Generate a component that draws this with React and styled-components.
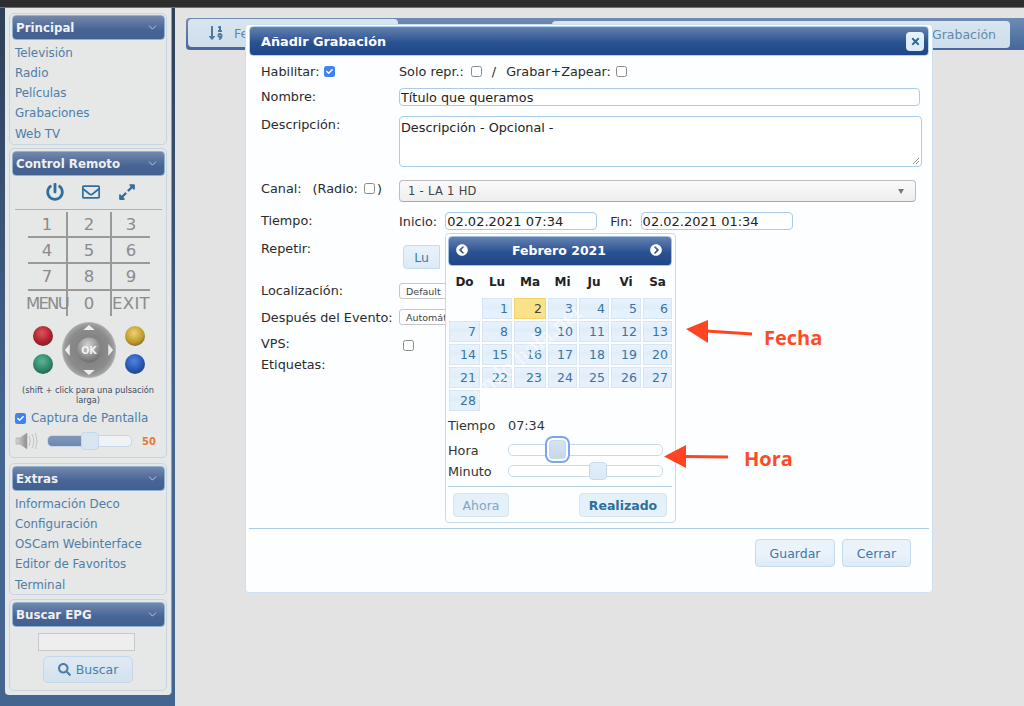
import React from "react";
import styled, { createGlobalStyle } from "styled-components";
import { ChevronDown } from "lucide-react";
import {
  FaPowerOff,
  FaRegEnvelope,
  FaExpandAlt,
  FaSortNumericDown,
  FaSearch,
  FaTimes,
  FaChevronCircleLeft,
  FaChevronCircleRight,
  FaCheck,
} from "react-icons/fa";

const Global = createGlobalStyle`
  html, body { margin: 0; padding: 0; height: 100%; overflow: hidden; }
  body { font-family: "DejaVu Sans", Verdana, sans-serif; background: #e3e3e3; }
  * { box-sizing: border-box; }
`;

const Page = styled.div`
  position: relative;
  width: 1024px;
  height: 706px;
  display: flex;
  flex-direction: column;
  overflow: hidden;
`;
const TopBar = styled.div`
  height: 8px;
  flex: none;
  background: #2e2e2e;
  border-bottom: 1px solid #4c7d9c;
`;
const Body = styled.div`
  flex: 1;
  display: flex;
  min-height: 0;
`;
const SideFrame = styled.aside`
  width: 175px;
  flex: none;
  padding: 0 3px 11px 5px;
  background: linear-gradient(#2f4058, #456591 60%);
`;
const SidePanel = styled.div`
  height: 100%;
  background: #e6e7e7;
  border-radius: 0 0 4px 4px;
  padding-top: 5px;
  border-right: 1px solid #7fa3c4;
`;
const Section = styled.section`
  width: 158px;
  height: ${(p) => p.$h}px;
  margin: ${(p) => p.$mt || 0}px 0 0 4px;
  border: 1px solid #c8d5e0;
  border-radius: 5px;
  display: flex;
  flex-direction: column;
`;
const SectionHead = styled.div`
  height: 25px;
  flex: none;
  margin: ${(p) => (p.$inset ? 2 : 1)}px 1px 0 2px;
  padding: 0 5px 0 3px;
  border-radius: 4px;
  border: 1px solid #8fb0cf;
  background: linear-gradient(#7488ac, #466496 60%, #44608f);
  color: #f0f0f0;
  font-weight: 700;
  font-size: 11.8px;
  display: flex;
  align-items: center;
  justify-content: space-between;
`;
const LinkList = styled.div`
  padding: 2.5px 0 0 5px;
`;
const SideLink = styled.div`
  height: 20.25px;
  line-height: 20.25px;
  font-size: 11.9px;
  color: #4d7ea6;
  white-space: nowrap;
`;
const IconBar = styled.div`
  margin: 6px 4px 0 5px;
  height: 28px;
  padding: 0 0 7px 5px;
  display: flex;
  align-items: center;
  justify-content: center;
  gap: 18px;
  color: #2f6f9f;
  font-size: 18px;
  border-bottom: 1px solid #8dbbdf;
`;
const Keypad = styled.div`
  width: 122px;
  margin: 2px 0 0 18px;
  display: grid;
  grid-template-columns: 40px 44px 38px;
  grid-template-rows: 26px 26px 26.5px 25px;
`;
const Key = styled.div`
  display: flex;
  align-items: center;
  justify-content: center;
  color: #8b8b8b;
  font-size: 16.5px;
  letter-spacing: ${(p) => p.$track || 0}px;
  white-space: nowrap;
  border-right: ${(p) => (p.$noRight ? "none" : "2.5px solid #999")};
  border-bottom: ${(p) => (p.$noBottom ? "none" : "2.5px solid #999")};
`;
const Remote = styled.div`
  margin: 6.5px 0 0 2px;
  display: flex;
  align-items: center;
  justify-content: center;
  gap: 9px;
`;
const BallColumn = styled.div`
  display: flex;
  flex-direction: column;
  gap: 8px;
`;
const Ball = styled.div`
  width: 20px;
  height: 20px;
  border-radius: 50%;
  background: radial-gradient(circle at 45% 35%, ${(p) => p.$light}, ${(p) => p.$c} 55%, #2c2c2c 110%);
`;
const Hint = styled.div`
  margin-top: 7px;
  font-size: 8.2px;
  line-height: 10px;
  text-align: center;
  color: #3c4d60;
`;
const CaptureRow = styled.div`
  margin: 5px 0 0 5px;
  display: flex;
  align-items: center;
  gap: 5px;
  font-size: 11.9px;
  color: #4d7ea6;
  height: 16px;
  white-space: nowrap;
`;
const CheckOn = styled.span`
  width: 11px;
  height: 11px;
  border-radius: 2.5px;
  background: #3f82f0;
  color: #fff;
  font-size: 7px;
  display: inline-flex;
  align-items: center;
  justify-content: center;
  flex: none;
`;
const CheckOff = styled.span`
  width: 11px;
  height: 11px;
  margin-left: ${(p) => p.$ml || 0}px;
  border-radius: 2.5px;
  background: #fff;
  border: 1px solid #8a8a8a;
  display: inline-block;
  flex: none;
`;
const VolumeRow = styled.div`
  margin: 5px 0 0 5px;
  display: flex;
  align-items: center;
  height: 20px;
`;
const VolumeTrack = styled.div`
  position: relative;
  width: 85px;
  height: 12px;
  margin-left: 8px;
  border: 1px solid #c5d7e8;
  border-radius: 5px;
  background: #f0f3f5;
`;
const VolumeFill = styled.div`
  height: 100%;
  background: linear-gradient(#8097bb, #6f88b0);
  border-radius: 4px 0 0 4px;
`;
const VolumeThumb = styled.div`
  position: absolute;
  left: 33px;
  top: -4px;
  width: 18px;
  height: 18px;
  border-radius: 4px;
  border: 1px solid #c5d7e8;
  background: #d9e5f0;
`;
const VolumeValue = styled.div`
  width: 22px;
  margin-left: 6px;
  font-size: 10px;
  font-weight: 700;
  color: #e07b39;
  background: #e9e9e9;
  text-align: center;
`;
const SearchField = styled.div`
  width: 97px;
  height: 18px;
  margin: 6px 0 0 28px;
  background: #eeeeee;
  border: 1px solid #c8c8c8;
`;
const SearchButton = styled.div`
  width: 90px;
  height: 27px;
  margin: 5px 0 0 33px;
  border-radius: 5px;
  border: 1px solid #c5d7e8;
  background: linear-gradient(#dfe9f2, #d3e2ee);
  color: #4d7ea6;
  font-size: 12.5px;
  display: flex;
  align-items: center;
  justify-content: center;
  gap: 5px;
`;

const Main = styled.main`
  flex: 1;
  padding: 10px 0 0 11px;
`;
const Toolbar = styled.div`
  height: 32px;
  display: flex;
  align-items: stretch;
  justify-content: space-between;
  padding: 0 14px 0 0;
  border-radius: 4px 0 0 4px;
  background: linear-gradient(#6e8bb3, #44689b);
  border-bottom: 1px solid #3f6ea0;
`;
const ToolButton = styled.div`
  margin: ${(p) => (p.$first ? "1px 0 2px 2px" : "3px 0 1px 0")};
  width: ${(p) => p.$w}px;
  border-radius: 4px;
  background: linear-gradient(#d9e5ef, #cfdeeb);
  color: #5b8bb0;
  font-size: 12.5px;
  display: flex;
  align-items: center;
  justify-content: ${(p) => (p.$first ? "flex-start" : "flex-end")};
  gap: 10px;
  padding: ${(p) => (p.$first ? "0 0 0 20px" : "0 14px 0 0")};
  white-space: nowrap;
`;

const Modal = styled.div`
  position: absolute;
  left: 245px;
  top: 24px;
  width: 688px;
  height: 569px;
  background: #fcfeff;
  border: 1px solid #cfe1f1;
  border-radius: 4px;
  padding: 1px 2px;
  display: flex;
  flex-direction: column;
`;
const TitleBar = styled.div`
  height: 30px;
  flex: none;
  margin: 0 1px;
  padding: 0 4px 0 11px;
  border-radius: 4px;
  border: 1px solid #b6d3ec;
  background: linear-gradient(#6682b0, #2a5292 55%, #1f4688);
  color: #fff;
  font-weight: 700;
  font-size: 12.8px;
  display: flex;
  align-items: center;
  justify-content: space-between;
`;
const CloseButton = styled.div`
  width: 18px;
  height: 19px;
  border-radius: 4px;
  background: linear-gradient(#e8f3fc, #d9eaf8);
  color: #2a6a9c;
  font-size: 11px;
  display: flex;
  align-items: center;
  justify-content: center;
`;
const Form = styled.div`
  padding-left: 13px;
`;
const Row = styled.div`
  display: flex;
  height: ${(p) => p.$h}px;
  margin-top: ${(p) => p.$mt}px;
  font-size: 12.8px;
  color: #2b2b2b;
`;
const Label = styled.div`
  width: 138px;
  flex: none;
  display: flex;
  gap: 5px;
  align-items: center;
  white-space: nowrap;
  height: ${(p) => p.$lh || 16}px;
  margin-top: ${(p) => p.$top || 0}px;
`;
const Inline = styled.div`
  display: flex;
  align-items: center;
  gap: ${(p) => p.$gap || 5}px;
  white-space: nowrap;
  height: 100%;
`;
const Slash = styled.span`
  margin: 0 5px;
`;
const RadioOpen = styled.span`
  margin-left: 6px;
`;
const RadioClose = styled.span`
  margin-left: -3px;
`;
const FinLabel = styled.span`
  margin-left: 5px;
`;
const Field = styled.div`
  width: ${(p) => p.$w}px;
  height: 100%;
  border: 1px solid #a9cde8;
  border-radius: 4px;
  background: #fff;
  padding: ${(p) => (p.$multi ? "3px 1px" : "1px 1px 0")};
  font-size: ${(p) => p.$fs || 12.8}px;
  line-height: 16px;
  color: #222;
  white-space: nowrap;
  position: relative;
`;
const Grip = styled.svg`
  position: absolute;
  right: 1px;
  bottom: 1px;
`;
const SelectBox = styled.div`
  width: 517px;
  height: 100%;
  border: 1px solid #bdbdbd;
  border-bottom-color: #a8a8a8;
  border-radius: 4px;
  background: linear-gradient(#fafafa, #eeeeee);
  font-size: 11.5px;
  letter-spacing: 0.3px;
  color: #444;
  display: flex;
  align-items: center;
  justify-content: space-between;
  padding: 0 11px 0 8px;
`;
const Caret = styled.span`
  width: 0;
  height: 0;
  border-left: 3.5px solid transparent;
  border-right: 3.5px solid transparent;
  border-top: 5px solid #777;
`;
const MiniSelect = styled.div`
  width: 70px;
  height: 100%;
  border: 1px solid #c6c6c6;
  border-radius: 3px;
  background: #fff;
  font-size: 9.5px;
  color: #444;
  display: flex;
  align-items: center;
  padding-left: 6px;
  overflow: hidden;
  white-space: nowrap;
`;
const DayToggle = styled.div`
  width: 37px;
  height: 24px;
  margin-left: 4px;
  border: 1px solid #c5dbec;
  border-radius: 4px 0 0 4px;
  background: linear-gradient(#e8f2fb, #dcebf8);
  color: #3d7cab;
  font-size: 12.5px;
  display: flex;
  align-items: center;
  justify-content: center;
`;
const VpsBox = styled.div`
  margin: 4px 0 0 4px;
`;
const Footer = styled.div`
  margin: auto 1px 0;
  height: 63px;
  flex: none;
  border-top: 1px solid #a9cde8;
  display: flex;
  justify-content: flex-end;
  align-items: flex-start;
  gap: 7px;
  padding: 10px 18px 0 0;
`;
const ActionButton = styled.div`
  width: ${(p) => p.$w}px;
  height: 28px;
  border-radius: 4px;
  border: 1px solid #c5dbec;
  background: linear-gradient(#eaf3fc 50%, #dcebf9);
  color: #3f77a6;
  font-size: 12.5px;
  display: flex;
  align-items: center;
  justify-content: center;
`;

const Picker = styled.div`
  position: absolute;
  left: 199px;
  top: 208px;
  width: 231px;
  height: 290px;
  background: #fdfeff;
  border: 1px solid #c5dbec;
  border-radius: 4px;
  padding: 2px 3px 2px 2px;
  overflow: hidden;
`;
const PickerHead = styled.div`
  height: 30px;
  border-radius: 4px;
  border: 1px solid #9fc3e2;
  background: linear-gradient(#6682b0, #2a5292 55%, #1f4688);
  color: #fff;
  font-weight: 700;
  font-size: 12.5px;
  display: flex;
  align-items: center;
  justify-content: space-between;
  padding: 0 9px 2px 7px;
`;
const NavIcon = styled.span`
  display: inline-flex;
  font-size: 12px;
`;
const Weekdays = styled.div`
  display: grid;
  grid-template-columns: 31px 30px 32px 29px 30px 30px 29px;
  column-gap: 2px;
  margin: 4px 0 4px 1px;
  height: 24px;
  align-items: center;
  font-size: 12px;
  font-weight: 700;
  color: #222;
  text-align: center;
`;
const DayGrid = styled.div`
  display: grid;
  grid-template-columns: 31px 30px 32px 29px 30px 30px 29px;
  grid-auto-rows: 21px;
  gap: 2px;
  margin: 0 0 0 1px;
`;
const Day = styled.div`
  grid-column: ${(p) => p.$col || "auto"};
  border: 1px solid ${(p) => (p.$today ? "#f5d36b" : "#d6e6f4")};
  background: ${(p) => (p.$today ? "#fae28a" : "linear-gradient(#e8f2fc, #dfedf9 50%, #e4f0fb 55%, #e6f1fb)")};
  color: ${(p) => (p.$today ? "#444" : "#3a74a4")};
  font-size: 12.5px;
  line-height: 20px;
  text-align: right;
  padding-right: 3px;
`;
const Watermark = styled.div`
  position: absolute;
  left: -15px;
  top: 103px;
  width: 190px;
  transform: rotate(-40deg);
  font-family: "Liberation Serif", serif;
  font-size: 25px;
  line-height: 30px;
  text-align: center;
  color: rgba(255, 255, 255, 0.6);
  pointer-events: none;
  white-space: nowrap;
`;
const TimeRow = styled.div`
  display: grid;
  grid-template-columns: 60px 155px;
  align-items: center;
  height: ${(p) => p.$h}px;
  margin-top: ${(p) => p.$mt || 0}px;
  font-size: 12.8px;
  color: #333;
  white-space: nowrap;
`;
const SliderName = styled.span`
  margin-top: 2px;
`;
const Track = styled.div`
  position: relative;
  height: 12px;
  border: 1px solid #c5dbec;
  border-radius: 5px;
  background: #fff;
`;
const Thumb = styled.div`
  position: absolute;
  left: ${(p) => p.$x}px;
  top: -4px;
  width: 18px;
  height: 18px;
  border-radius: 4px;
  background: linear-gradient(#e2eefa, #dbe8f5);
  border: 1px solid #c5dbec;
  ${(p) =>
    p.$focus &&
    `top: -5px; width: 17px; height: 19px; background: linear-gradient(#d4e3f1, #c6d8e9); box-shadow: 0 0 0 2px #fff, 0 0 0 4px #7ba6ee;`}
`;
const PickerRule = styled.div`
  height: 1px;
  margin: 5px 0 0 0;
  background: #b9cfe2;
`;
const PickerButtons = styled.div`
  display: flex;
  justify-content: space-between;
  padding: 6px 5px 0 5px;
`;
const PickerButton = styled.div`
  height: 24px;
  width: ${(p) => p.$w}px;
  border-radius: 4px;
  border: 1px solid #d5e5f2;
  background: #e4f0fa;
  color: ${(p) => (p.$strong ? "#2e6e9e" : "#7ea7c6")};
  font-weight: ${(p) => (p.$strong ? 700 : 400)};
  font-size: 12.5px;
  display: flex;
  align-items: center;
  justify-content: center;
`;

const Annotation = styled.div`
  position: absolute;
  left: ${(p) => p.$x}px;
  top: ${(p) => p.$y}px;
  display: flex;
  align-items: flex-start;
  gap: ${(p) => p.$gap}px;
`;
const AnnotationText = styled.div`
  font-family: "Open Sans", "DejaVu Sans", sans-serif;
  font-weight: 700;
  font-size: 20px;
  line-height: 22px;
  color: #ff4a26;
  margin-top: ${(p) => p.$mt}px;
`;

function Arrow({ shaft, head }) {
  return (
    <svg width="68" height="27" viewBox="0 0 68 27">
      <path d={shaft} stroke="#ff4422" strokeWidth="3" fill="none" />
      <path d={head} fill="#ff4422" />
    </svg>
  );
}

function Speaker() {
  return (
    <svg width="24" height="20" viewBox="0 0 24 20">
      <defs>
        <linearGradient id="spk" x1="0" x2="1">
          <stop offset="0" stopColor="#d8d8d8" />
          <stop offset="1" stopColor="#8e8e8e" />
        </linearGradient>
      </defs>
      <path d="M1 7h4L12 2v16L5 13H1Z" fill="url(#spk)" stroke="#a5a5a5" strokeWidth=".6" />
      <path d="M14 5q2.500 5 0 10M17 3q3.500 7 0 14M20.500 2q3 8 0 16" stroke="#b7b7b7" fill="none" strokeWidth=".8" />
    </svg>
  );
}

function Dpad() {
  return (
    <svg width="54" height="56" viewBox="0 0 56 56" preserveAspectRatio="none">
      <defs>
        <radialGradient id="okg" cx=".45" cy=".3" r=".8">
          <stop offset="0" stopColor="#d2d2d2" />
          <stop offset="1" stopColor="#5f5f5f" />
        </radialGradient>
        <radialGradient id="ring" cx=".5" cy=".5" r=".5">
          <stop offset="0" stopColor="#777" />
          <stop offset=".8" stopColor="#8c8c8c" />
          <stop offset="1" stopColor="#a6a6a6" />
        </radialGradient>
      </defs>
      <circle cx="28" cy="28" r="27.500" fill="url(#ring)" stroke="#b5b5b5" />
      <circle cx="28" cy="28" r="12.500" fill="url(#okg)" />
      <text x="28" y="32" textAnchor="middle" fontFamily="DejaVu Sans" fontWeight="700" fontSize="10" fill="#f2f2f2">OK</text>
      <path d="M28 3l6 5H22ZM28 53l6-5H22ZM3 28l5-6V34ZM53 28l-5-6V34Z" fill="#ededed" />
    </svg>
  );
}

const keys = [
  { k: "1" }, { k: "2" }, { k: "3" },
  { k: "4" }, { k: "5" }, { k: "6" },
  { k: "7" }, { k: "8" }, { k: "9" },
  { k: "MENU", track: -1.8 }, { k: "0" }, { k: "EXIT", track: 0.3 },
];
const week = ["Do", "Lu", "Ma", "Mi", "Ju", "Vi", "Sa"];
const days = Array.from({ length: 28 }, (_, i) => i + 1);

function Head({ children, inset }) {
  return (
    <SectionHead $inset={inset}>
      {children}
      <ChevronDown size={13} strokeWidth={1.4} color="#dfe6f0" />
    </SectionHead>
  );
}

export default function App() {
  return (
    <Page>
      <Global />
      <TopBar />
      <Body>
        <SideFrame>
          <SidePanel>
            <Section $h={132}>
              <Head>Principal</Head>
              <LinkList>
                {["Televisión", "Radio", "Películas", "Grabaciones", "Web TV"].map((t) => (
                  <SideLink key={t}>{t}</SideLink>
                ))}
              </LinkList>
            </Section>
            <Section $h={310} $mt={3}>
              <Head inset>Control Remoto</Head>
              <IconBar>
                <FaPowerOff />
                <FaRegEnvelope />
                <FaExpandAlt />
              </IconBar>
              <Keypad>
                {keys.map(({ k, track }, i) => (
                  <Key key={k} $track={track} $noRight={i % 3 === 2} $noBottom={i > 8}>
                    {k}
                  </Key>
                ))}
              </Keypad>
              <Remote>
                <BallColumn>
                  <Ball $c="#a8212e" $light="#e0525c" />
                  <Ball $c="#2c8467" $light="#5cb598" />
                </BallColumn>
                <Dpad />
                <BallColumn>
                  <Ball $c="#c09a2b" $light="#ecd272" />
                  <Ball $c="#2554b0" $light="#4f84e0" />
                </BallColumn>
              </Remote>
              <Hint>
                (shift + click para una pulsación
                <br />
                larga)
              </Hint>
              <CaptureRow>
                <CheckOn>
                  <FaCheck />
                </CheckOn>
                Captura de Pantalla
              </CaptureRow>
              <VolumeRow>
                <Speaker />
                <VolumeTrack>
                  <VolumeFill style={{ width: "50%" }} />
                  <VolumeThumb />
                </VolumeTrack>
                <VolumeValue>50</VolumeValue>
              </VolumeRow>
            </Section>
            <Section $h={132} $mt={5}>
              <Head inset>Extras</Head>
              <LinkList>
                {["Información Deco", "Configuración", "OSCam Webinterface", "Editor de Favoritos", "Terminal"].map((t) => (
                  <SideLink key={t}>{t}</SideLink>
                ))}
              </LinkList>
            </Section>
            <Section $h={92} $mt={4}>
              <Head inset>Buscar EPG</Head>
              <SearchField />
              <SearchButton>
                <FaSearch size={13} />
                Buscar
              </SearchButton>
            </Section>
          </SidePanel>
        </SideFrame>
        <Main>
          <Toolbar>
            <ToolButton $first $w={210}>
              <FaSortNumericDown size={16} color="#4a78a0" />
              Fe
            </ToolButton>
            <ToolButton $w={458}>Grabación</ToolButton>
          </Toolbar>
        </Main>
      </Body>

      <Modal>
        <TitleBar>
          Añadir Grabación
          <CloseButton>
            <FaTimes />
          </CloseButton>
        </TitleBar>
        <Form>
          <Row $h={20} $mt={5}>
            <Label $lh={20}>
              Habilitar:
              <CheckOn>
                <FaCheck />
              </CheckOn>
            </Label>
            <Inline>
              Solo repr.:
              <CheckOff $ml={2} />
              <Slash>/</Slash>
              Grabar+Zapear:
              <CheckOff />
            </Inline>
          </Row>
          <Row $h={18} $mt={7}>
            <Label>Nombre:</Label>
            <Field $w={521}>Título que queramos</Field>
          </Row>
          <Row $h={51} $mt={10}>
            <Label>Descripción:</Label>
            <Field $w={523} $multi>
              Descripción - Opcional -
              <Grip width="8" height="8" viewBox="0 0 8 8">
                <path d="M1 7L7 1M4 7L7 4" stroke="#777" strokeWidth=".8" />
              </Grip>
            </Field>
          </Row>
          <Row $h={22} $mt={13}>
            <Label>
              Canal:
              <RadioOpen>(Radio:</RadioOpen>
              <CheckOff $ml={1} />
              <RadioClose>)</RadioClose>
            </Label>
            <SelectBox>
              1 - LA 1 HD
              <Caret />
            </SelectBox>
          </Row>
          <Row $h={18} $mt={10}>
            <Label>Tiempo:</Label>
            <Inline $gap={8}>
              Inicio:
              <Field $w={152} $fs={13}>02.02.2021 07:34</Field>
              <FinLabel>Fin:</FinLabel>
              <Field $w={152} $fs={13}>02.02.2021 01:34</Field>
            </Inline>
          </Row>
          <Row $h={24} $mt={15}>
            <Label $top={-5}>Repetir:</Label>
            <DayToggle>Lu</DayToggle>
          </Row>
          <Row $h={16} $mt={14}>
            <Label $top={-1}>Localización:</Label>
            <MiniSelect>Default</MiniSelect>
          </Row>
          <Row $h={16} $mt={10}>
            <Label>Después del Evento:</Label>
            <MiniSelect>Automático</MiniSelect>
          </Row>
          <Row $h={16} $mt={10}>
            <Label>VPS:</Label>
            <VpsBox>
              <CheckOff />
            </VpsBox>
          </Row>
          <Row $h={16} $mt={5}>
            <Label>Etiquetas:</Label>
          </Row>
        </Form>
        <Footer>
          <ActionButton $w={80}>Guardar</ActionButton>
          <ActionButton $w={69}>Cerrar</ActionButton>
        </Footer>
        <Picker>
          <PickerHead>
            <NavIcon>
              <FaChevronCircleLeft />
            </NavIcon>
            Febrero 2021
            <NavIcon>
              <FaChevronCircleRight />
            </NavIcon>
          </PickerHead>
          <Weekdays>
            {week.map((w) => (
              <div key={w}>{w}</div>
            ))}
          </Weekdays>
          <DayGrid>
            {days.map((d) => (
              <Day key={d} $today={d === 2} $col={d === 1 ? 2 : undefined}>
                {d}
              </Day>
            ))}
          </DayGrid>
          <Watermark>ando hola.net</Watermark>
          <TimeRow $h={18} $mt={5}>
            <span>Tiempo</span>
            <span>07:34</span>
          </TimeRow>
          <TimeRow $h={21} $mt={5}>
            <SliderName>Hora</SliderName>
            <Track>
              <Thumb $focus $x={40} />
            </Track>
          </TimeRow>
          <TimeRow $h={21}>
            <SliderName>Minuto</SliderName>
            <Track>
              <Thumb $x={80} />
            </Track>
          </TimeRow>
          <PickerRule />
          <PickerButtons>
            <PickerButton $w={56}>Ahora</PickerButton>
            <PickerButton $w={88} $strong>
              Realizado
            </PickerButton>
          </PickerButtons>
        </Picker>
      </Modal>

      <Annotation $x={686} $y={317} $gap={10}>
        <Arrow shaft="M66 17L20 14" head="M0 12L22 3V26Z" />
        <AnnotationText $mt={10}>Fecha</AnnotationText>
      </Annotation>
      <Annotation $x={664} $y={444} $gap={12}>
        <Arrow shaft="M64 13L20 12.500" head="M0 12.500L22 1V24Z" />
        <AnnotationText $mt={4}>Hora</AnnotationText>
      </Annotation>
    </Page>
  );
}
